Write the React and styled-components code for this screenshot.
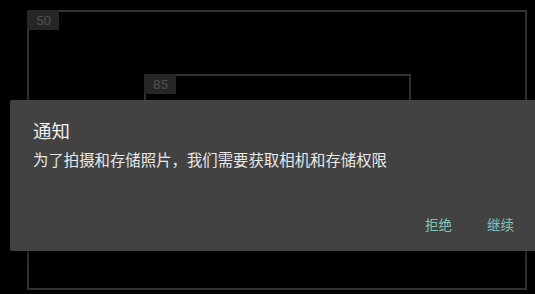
import React from 'react';
import styled, {createGlobalStyle} from 'styled-components';

const GlobalStyle = createGlobalStyle`
    html, body {
        margin: 0;
        padding: 0;
        background: #000;
        width: 535px;
        height: 294px;
        overflow: hidden;
        font-family: "Noto Sans CJK SC", "Noto Sans", Roboto, sans-serif;
    }
`;

const Screen = styled.div`
    position: relative;
    width: 535px;
    height: 294px;
    background: #000;
    padding: 10px 0 0 27px;
    box-sizing: border-box;
`;

const Frame = styled.div`
    box-sizing: border-box;
    width: ${props => props.w}px;
    height: ${props => props.h}px;
    margin: ${props => props.top || 0}px 0 0 ${props => props.left || 0}px;
    border: 2px solid #303030;
    display: flex;
    flex-direction: column;
    align-items: flex-start;
`;

const Label = styled.span`
    display: block;
    width: 32px;
    height: 20px;
    margin: -2px 0 0 -2px;
    background: #262626;
    color: #4e4e4e;
    font-family: Roboto, "Liberation Sans", sans-serif;
    font-size: 13.5px;
    line-height: 20px;
    padding-left: 9px;
    box-sizing: border-box;
`;

const Dialog = styled.div`
    position: absolute;
    left: 10px;
    top: 100px;
    width: 525px;
    height: 151px;
    box-sizing: border-box;
    background: #424242;
    border-radius: 2px 0 0 2px;
    box-shadow: 0 2px 6px rgba(0,0,0,.5);
    padding: 18px 13px 0 23px;
    display: flex;
    flex-direction: column;
`;

const Title = styled.h2`
    margin: 0;
    font-size: 18.5px;
    line-height: 24px;
    font-weight: 400;
    color: #f0f0f0;
`;

const Message = styled.p`
    margin: 6px 0 0;
    font-size: 15.4px;
    line-height: 22px;
    color: #e8e8e8;
`;

const Actions = styled.div`
    margin-top: auto;
    margin-bottom: 17px;
    display: flex;
    justify-content: flex-end;
    gap: 19px;
`;

const Action = styled.button`
    background: none;
    border: none;
    padding: 0 8px;
    font-family: inherit;
    font-size: 13.5px;
    line-height: 20px;
    color: #80c4b8;
    cursor: pointer;
`;

export default function App() {
    return (
        <Screen>
            <GlobalStyle />
            <Frame w={500} h={280}>
                <Label>50</Label>
                <Frame w={267} h={160} top={44} left={115}>
                    <Label>85</Label>
                </Frame>
            </Frame>

            <Dialog>
                <Title>通知</Title>
                <Message>为了拍摄和存储照片，我们需要获取相机和存储权限</Message>
                <Actions>
                    <Action>拒绝</Action>
                    <Action>继续</Action>
                </Actions>
            </Dialog>
        </Screen>
    );
}
